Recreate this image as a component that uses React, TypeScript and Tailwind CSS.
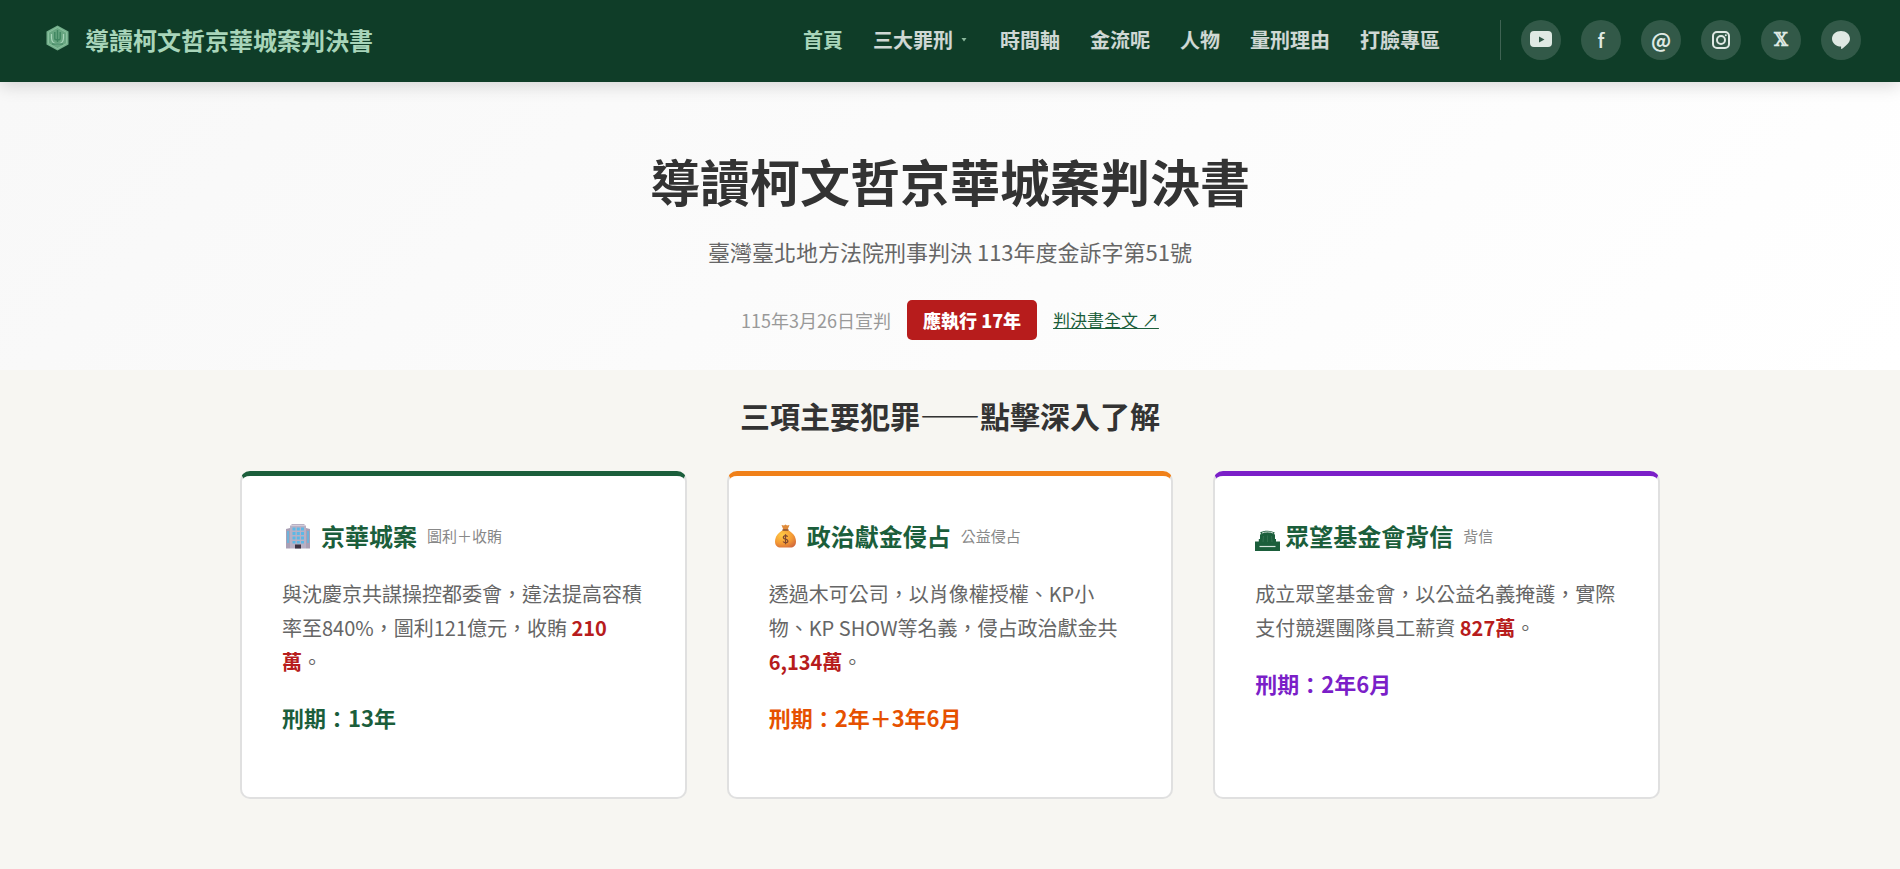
import type { ReactNode } from "react";

const navItems = [
	{ label: "首頁", active: true },
	{ label: "三大罪刑", dropdown: true },
	{ label: "時間軸" },
	{ label: "金流呢" },
	{ label: "人物" },
	{ label: "量刑理由" },
	{ label: "打臉專區" },
];

const socials: { name: string; icon: ReactNode }[] = [
	{
		name: "YouTube",
		icon: (
			<svg width="22" height="16" viewBox="0 0 22 16" className="mb-0.5">
				<path
					fill="currentColor"
					fillRule="evenodd"
					d="M4 0h14a4 4 0 0 1 4 4v8a4 4 0 0 1-4 4H4a4 4 0 0 1-4-4V4a4 4 0 0 1 4-4ZM9 5.500v6l5.500-3Z"
				/>
			</svg>
		),
	},
	{ name: "Facebook", icon: <span className="text-xl font-medium">f</span> },
	{ name: "Threads", icon: <span className="text-xl font-bold">@</span> },
	{
		name: "Instagram",
		icon: (
			<svg width="20" height="20" viewBox="0 0 20 20" fill="none" stroke="currentColor" strokeWidth="2">
				<rect x="2" y="2" width="16" height="16" rx="4" />
				<circle cx="10" cy="10" r="4" />
				<circle cx="14.8" cy="5.2" r="1" fill="currentColor" stroke="none" />
			</svg>
		),
	},
	{ name: "X", icon: <span className="font-['DejaVu_Serif',serif] text-lg font-bold">𝕏</span> },
	{
		name: "LINE",
		icon: (
			<svg width="18" height="18" viewBox="0 0 18 18">
				<path
					fill="currentColor"
					d="M9 0c5 0 9 3.4 9 7.7 0 4.200-4.500 7.300-8.300 10.300-.7.100-.6-1.100-.6-2.400C4 15.500 0 12 0 7.700 0 3.400 4 0 9 0Z"
				/>
			</svg>
		),
	},
];

const BuildingIcon = () => (
	<svg width="24" height="25" viewBox="0 0 24 25" className="ml-1 mr-[11px]">
		<path d="M0 5l4-1v20.500H0zM24 5l-4-1v20.500h4z" fill="#a99fb5" />
		<path d="M4 2l2-2h12l2 2v22.500H4z" fill="#b8b0c4" />
		<path d="M5 1.500h14" stroke="#d3ccd9" strokeWidth="1" />
		<g fill="#5cb8e6">
			<path d="M6.500 3.500h3v3h-3zM10.800 3.500h3v3h-3zM15 3.500h3v3h-3z" />
			<path d="M6.500 8h3v3h-3zM10.800 8h3v3h-3zM15 8h3v3h-3z" />
			<path d="M6.500 12.500h3v3h-3zM10.800 12.500h3v3h-3zM15 12.500h3v3h-3z" />
			<path d="M6.500 17h3v2.500h-3zM10.800 17h3v2.500h-3zM15 17h3v2.500h-3z" />
			<path d="M1 7h2v12H1zM21 7h2v12h-2z" opacity=".75" />
		</g>
		<path d="M9 20.500h6v4H9z" fill="#3d3444" />
	</svg>
);

const MoneyBagIcon = () => (
	<svg width="21" height="24" viewBox="0 0 21 24" className="ml-1.5 mr-[11px]">
		<defs>
			<radialGradient id="bag" cx=".35" cy=".3" r=".8">
				<stop offset="0" stopColor="#ffcb45" />
				<stop offset=".6" stopColor="#f49a35" />
				<stop offset="1" stopColor="#d36b3c" />
			</radialGradient>
		</defs>
		<path d="M6.500 1l2.500.6L10.500.5l1.500 1 2.500-.5-2 5h-4z" fill="#e08b3a" />
		<path d="M8 6h5c4.500 2.500 8 6.500 8 11.500 0 4-2.500 6-5.500 6h-10C2.500 23.500 0 21.500 0 17.500 0 12.500 3.500 8.500 8 6z" fill="url(#bag)" />
		<path d="M7.500 6h6" stroke="#8a5030" strokeWidth="1.500" />
		<path
			d="M12.600 12.800c-.5-.8-1.200-1.100-2.100-1.100-1.300 0-2.200.7-2.200 1.700 0 2.400 4.600 1.100 4.600 3.500 0 1.100-1.100 1.800-2.400 1.800-1.100 0-1.900-.4-2.400-1.200M10.500 10.300v9.900"
			fill="none"
			stroke="#7d4630"
			strokeWidth="1.200"
		/>
	</svg>
);

const FoundationIcon = () => (
	<svg width="25" height="21" viewBox="0 0 25 21" className="mt-2 mr-[5px]">
		<path
			d="M5 2.800C9 .2 16 .2 20 2.800l-1.500 1.200 1.500.5v4.500h1v2.500h4V21H0v-9.500h3.800V9H5V4.500L6.500 4z"
			fill="#1b5e3b"
		/>
		<path d="M7 3c3.500-1.400 7.500-1.400 11 0" fill="none" stroke="#fff" strokeWidth=".8" />
		<path d="M4.500 16.500h16" stroke="#d5e5dc" strokeWidth="1.200" />
		<path d="M8.500 6l-.5 6M12.500 5.500V12M16.500 6l.5 6" stroke="#427b5b" strokeWidth=".6" />
	</svg>
);

const crimes = [
	{
		title: "京華城案",
		tag: "圖利＋收賄",
		icon: <BuildingIcon />,
		before: "與沈慶京共謀操控都委會，違法提高容積率至840%，圖利121億元，收賄 ",
		amount: "210萬",
		term: "刑期：13年",
		border: "border-t-[#1b5e3b]",
		color: "text-[#1b5e3b]",
	},
	{
		title: "政治獻金侵占",
		tag: "公益侵占",
		icon: <MoneyBagIcon />,
		before: "透過木可公司，以肖像權授權、KP小物、KP SHOW等名義，侵占政治獻金共 ",
		amount: "6,134萬",
		term: "刑期：2年＋3年6月",
		border: "border-t-[#f08019]",
		color: "text-[#e65100]",
	},
	{
		title: "眾望基金會背信",
		tag: "背信",
		icon: <FoundationIcon />,
		before: "成立眾望基金會，以公益名義掩護，實際支付競選團隊員工薪資 ",
		amount: "827萬",
		term: "刑期：2年6月",
		border: "border-t-[#7b1fc8]",
		color: "text-[#7b1fc8]",
	},
];

function Header() {
	return (
		<header className="relative z-10 flex min-h-[82px] flex-wrap items-center justify-between bg-[#0f3d28] px-[39px] pb-0.5 shadow-[0_4px_16px_rgba(0,0,0,0.15)]">
			<a href="#" className="flex items-center gap-3.5 text-2xl font-bold text-[#a8d5ba]">
				<svg width="32" height="32" viewBox="0 0 32 32" className="mb-1">
					<path d="M18.500 3.500 29.500 9.500v13L18.500 28.500 7.500 22.500v-13z" fill="#74b08c" />
					<path d="M18.500 5.500 27.500 10.500v11L18.500 26.500 9.500 21.500v-11z" fill="#68a681" stroke="#95c9a8" strokeWidth=".7" />
					<path d="M12.500 12v4c0 8 12 8 12 0v-4" fill="none" stroke="#a8d5ba" strokeWidth="1.200" />
					<path d="M18.500 8v12M15.800 10v6.500c0 2 5.400 2 5.400 0V10" fill="none" stroke="#3f8560" strokeWidth="1.400" />
					<path d="M13 22h11" stroke="#3f8560" strokeWidth="1.200" />
				</svg>
				<span>導讀柯文哲京華城案判決書</span>
			</a>
			<div className="flex items-center">
				<nav className="mr-[60px] flex items-center gap-[30px] text-xl font-bold">
					{navItems.map((item) => (
						<a
							key={item.label}
							href="#"
							className={item.active ? "text-[#a8d5ba]" : "flex items-center text-white/80"}
						>
							{item.label}
							{item.dropdown && (
								<svg width="6" height="4" viewBox="0 0 6 4" className="ml-2 mr-[3px] text-[#8bb89c]">
									<path d="M.5 0h5L3 3.500z" fill="currentColor" />
								</svg>
							)}
						</a>
					))}
				</nav>
				<div className="flex h-10 items-center gap-5 border-l border-white/20 pl-5">
					{socials.map((item) => (
						<a
							key={item.name}
							href="#"
							aria-label={item.name}
							className="flex h-10 w-10 items-center justify-center rounded-full bg-white/15 text-[#dfe9e3]"
						>
							{item.icon}
						</a>
					))}
				</div>
			</div>
		</header>
	);
}

export default function App() {
	return (
		<div className="min-h-screen bg-[#f7f6f2] font-['Noto_Sans_CJK_TC',sans-serif] text-[#333]" lang="zh-TW">
			<Header />

			<section className="bg-linear-135 from-[#f8f8f8] to-white px-10 pt-[60px] pb-[30px] text-center">
				<h1 className="text-[50px] leading-[76px] font-bold">導讀柯文哲京華城案判決書</h1>
				<p className="mt-3.5 text-[22px] leading-[38px] text-[#666]">臺灣臺北地方法院刑事判決 113年度金訴字第51號</p>
				<div className="mt-[30px] flex flex-wrap items-center justify-center gap-4">
					<span className="text-lg text-[#999]">115年3月26日宣判</span>
					<span className="rounded-[5px] bg-[#b71c1c] px-4 text-lg leading-10 font-black text-white">應執行 17年</span>
					<a href="#" className="text-[17px] text-[#1b5e3b] underline">
						判決書全文 ↗
					</a>
				</div>
			</section>

			<main className="mx-auto max-w-[1500px] px-10 pt-5 pb-[70px]">
				<h2 className="mb-[31px] text-center text-3xl leading-[50px] font-bold">三項主要犯罪——點擊深入了解</h2>
				<div className="grid grid-cols-1 gap-10 lg:grid-cols-3">
					{crimes.map((crime) => (
						<a
							key={crime.title}
							href="#"
							className={`block rounded-[10px] border-2 border-t-[5px] border-[#e0e0e0] bg-white p-10 ${crime.border}`}
						>
							<h3 className="flex items-center text-2xl leading-10 font-bold text-[#1b5e3b]">
								{crime.icon}
								{crime.title}
								<span className="ml-2.5 text-[15px] font-normal text-[#888]">{crime.tag}</span>
							</h3>
							<p className="mt-[21px] text-xl leading-[34px] text-[#666]">
								{crime.before}
								<strong className="font-bold text-[#b71c1c]">{crime.amount}</strong>。
							</p>
							<p className={`mt-5 mb-[22px] text-[22px] leading-9 font-bold ${crime.color}`}>{crime.term}</p>
						</a>
					))}
				</div>
			</main>
		</div>
	);
}
